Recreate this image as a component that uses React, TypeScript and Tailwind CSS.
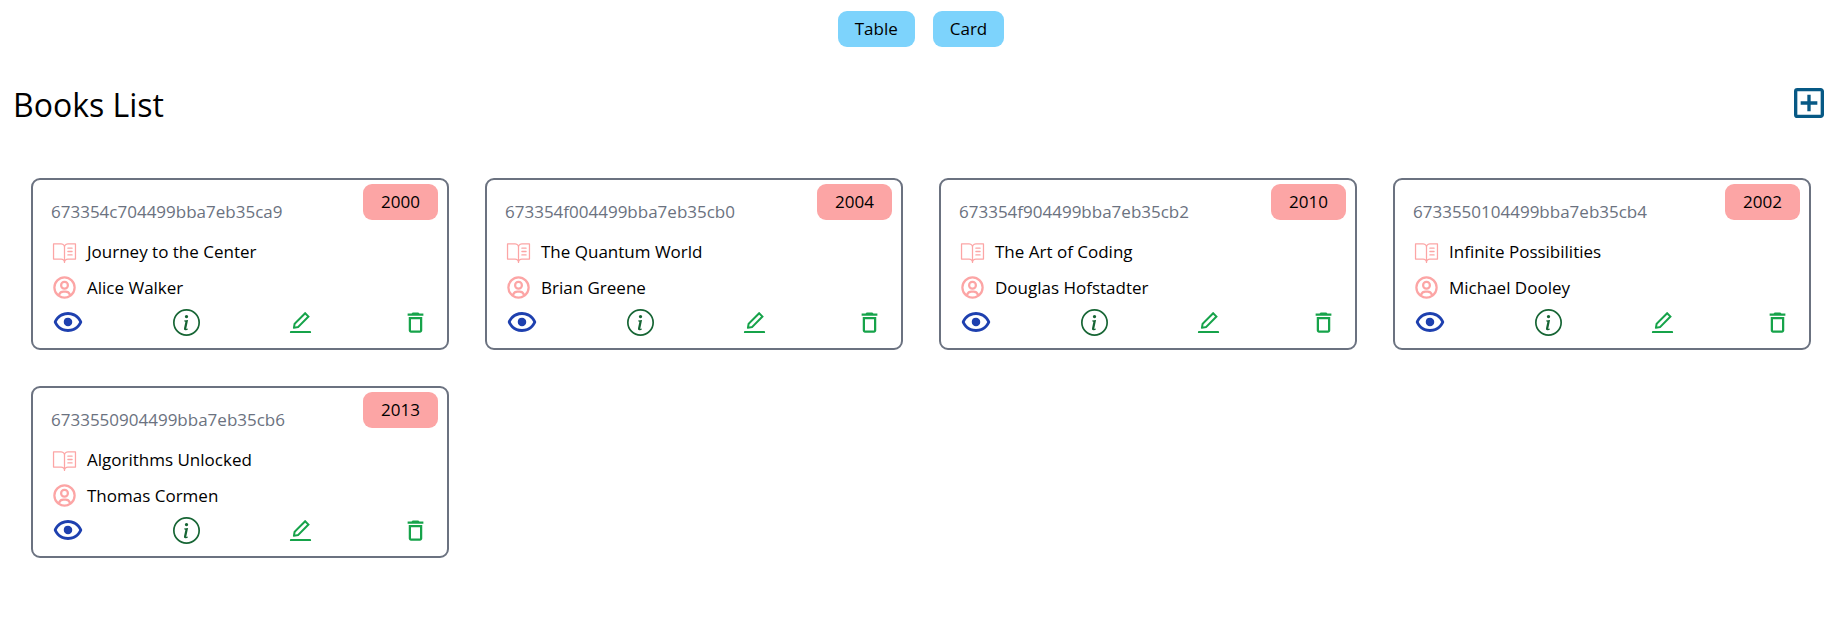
import { AiOutlineEdit } from "react-icons/ai";
import { BiShow, BiUserCircle } from "react-icons/bi";
import { BsInfoCircle } from "react-icons/bs";
import { MdOutlineAddBox, MdOutlineDelete } from "react-icons/md";
import { PiBookOpenTextLight } from "react-icons/pi";

interface Book {
  id: string;
  title: string;
  author: string;
  year: number;
}

const books: Book[] = [
  { id: "673354c704499bba7eb35ca9", title: "Journey to the Center", author: "Alice Walker", year: 2000 },
  { id: "673354f004499bba7eb35cb0", title: "The Quantum World", author: "Brian Greene", year: 2004 },
  { id: "673354f904499bba7eb35cb2", title: "The Art of Coding", author: "Douglas Hofstadter", year: 2010 },
  { id: "6733550104499bba7eb35cb4", title: "Infinite Possibilities", author: "Michael Dooley", year: 2002 },
  { id: "6733550904499bba7eb35cb6", title: "Algorithms Unlocked", author: "Thomas Cormen", year: 2013 },
];

function BookCard({ book }: { book: Book }) {
  return (
    <article className="relative rounded-[9px] border-2 border-[#6b7280] px-[18px] pt-[18px] pb-[9px]">
      <span className="absolute top-1 right-[9px] rounded-[9px] bg-[#fca5a5] px-[18px] py-1 leading-7">
        {book.year}
      </span>
      <h4 className="leading-[27px] text-[#6b7280]">{book.id}</h4>
      <div className="mt-[13px] flex items-center gap-[9px]">
        <PiBookOpenTextLight className="size-[27px] text-[#fca5a5]" />
        <h2 className="leading-[27px]">{book.title}</h2>
      </div>
      <div className="mt-[9px] flex items-center gap-[9px]">
        <BiUserCircle className="size-[27px] text-[#fca5a5]" />
        <h2 className="leading-[27px]">{book.author}</h2>
      </div>
      <div className="mt-1 flex items-center justify-between">
        <button type="button" aria-label="Preview">
          <BiShow className="size-[34px] text-[#1e40af]" />
        </button>
        <a href={`#/books/details/${book.id}`} aria-label="Details">
          <BsInfoCircle className="size-[27px] text-[#166534]" />
        </a>
        <a href={`#/books/edit/${book.id}`} aria-label="Edit">
          <AiOutlineEdit className="size-[27px] text-[#16a34a]" />
        </a>
        <a href={`#/books/delete/${book.id}`} aria-label="Delete">
          <MdOutlineDelete className="size-[27px] text-[#16a34a]" />
        </a>
      </div>
    </article>
  );
}

export default function App() {
  return (
    <main className="px-[13px] pt-[11px] pb-9 font-['Open_Sans','Noto_Sans',sans-serif] text-[17px] text-black">
      <div className="flex justify-center gap-[18px]">
        <button type="button" className="rounded-[9px] bg-[#7dd3fc] px-[17px] py-1 leading-7">
          Table
        </button>
        <button type="button" className="rounded-[9px] bg-[#7dd3fc] px-[17px] py-1 leading-7">
          Card
        </button>
      </div>
      <div className="mt-9 flex items-center justify-between">
        <h1 className="pt-1 text-[32px] leading-9">Books List</h1>
        <a href="#/books/create" aria-label="Add book">
          <MdOutlineAddBox className="size-10 text-[#075985]" />
        </a>
      </div>
      <section className="grid grid-cols-1 gap-9 px-[18px] pt-[55px] sm:grid-cols-2 lg:grid-cols-3 xl:grid-cols-4">
        {books.map((book) => (
          <BookCard key={book.id} book={book} />
        ))}
      </section>
    </main>
  );
}
